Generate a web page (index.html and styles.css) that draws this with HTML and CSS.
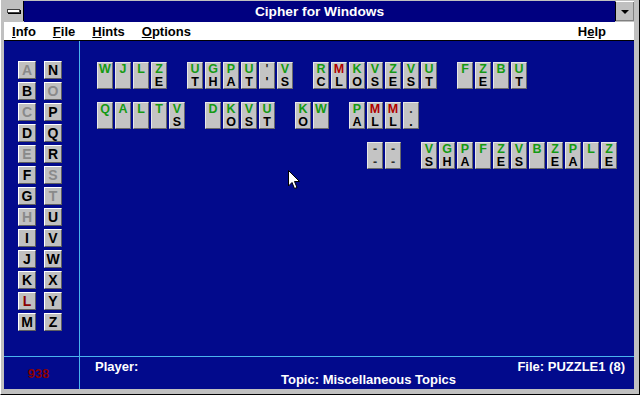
FILE: index.html
```html
<!DOCTYPE html>
<html>
<head>
<meta charset="utf-8">
<link rel="stylesheet" href="styles.css">
</head>
<body>
<div class="window">
  <div class="titlebar">
    <div class="sysbox"><span class="sysbar"></span></div>
    <div class="title">Cipher for Windows</div>
    <div class="minbox"><span class="tri"></span></div>
  </div>
  <div class="menubar">
    <span class="mi"><u>I</u>nfo</span>
    <span class="mi"><u>F</u>ile</span>
    <span class="mi"><u>H</u>ints</span>
    <span class="mi"><u>O</u>ptions</span>
    <span class="mi help">H<u>e</u>lp</span>
  </div>
  <div class="client">
    <div class="letters">
      <span class="lt dim">A</span><span class="lt">N</span>
      <span class="lt">B</span><span class="lt dim">O</span>
      <span class="lt dim">C</span><span class="lt">P</span>
      <span class="lt">D</span><span class="lt">Q</span>
      <span class="lt dim">E</span><span class="lt">R</span>
      <span class="lt">F</span><span class="lt dim">S</span>
      <span class="lt">G</span><span class="lt dim">T</span>
      <span class="lt dim">H</span><span class="lt">U</span>
      <span class="lt">I</span><span class="lt">V</span>
      <span class="lt">J</span><span class="lt">W</span>
      <span class="lt">K</span><span class="lt">X</span>
      <span class="lt red">L</span><span class="lt">Y</span>
      <span class="lt">M</span><span class="lt">Z</span>
    </div>
    <div class="puzzle">
      <div class="prow">
        <div class="word"><span class="t"><b>W</b><i></i></span><span class="t"><b>J</b><i></i></span><span class="t"><b>L</b><i></i></span><span class="t"><b>Z</b><i>E</i></span></div>
        <div class="word"><span class="t"><b>U</b><i>T</i></span><span class="t"><b>G</b><i>H</i></span><span class="t"><b>P</b><i>A</i></span><span class="t"><b>U</b><i>T</i></span><span class="t"><b class="p">'</b><i>'</i></span><span class="t"><b>V</b><i>S</i></span></div>
        <div class="word"><span class="t"><b>R</b><i>C</i></span><span class="t"><b class="r">M</b><i>L</i></span><span class="t"><b>K</b><i>O</i></span><span class="t"><b>V</b><i>S</i></span><span class="t"><b>Z</b><i>E</i></span><span class="t"><b>V</b><i>S</i></span><span class="t"><b>U</b><i>T</i></span></div>
        <div class="word"><span class="t"><b>F</b><i></i></span><span class="t"><b>Z</b><i>E</i></span><span class="t"><b>B</b><i></i></span><span class="t"><b>U</b><i>T</i></span></div>
      </div>
      <div class="prow">
        <div class="word"><span class="t"><b>Q</b><i></i></span><span class="t"><b>A</b><i></i></span><span class="t"><b>L</b><i></i></span><span class="t"><b>T</b><i></i></span><span class="t"><b>V</b><i>S</i></span></div>
        <div class="word"><span class="t"><b>D</b><i></i></span><span class="t"><b>K</b><i>O</i></span><span class="t"><b>V</b><i>S</i></span><span class="t"><b>U</b><i>T</i></span></div>
        <div class="word"><span class="t"><b>K</b><i>O</i></span><span class="t"><b>W</b><i></i></span></div>
        <div class="word"><span class="t"><b>P</b><i>A</i></span><span class="t"><b class="r">M</b><i>L</i></span><span class="t"><b class="r">M</b><i>L</i></span><span class="t"><b class="p">.</b><i>.</i></span></div>
      </div>
      <div class="prow shifted">
        <div class="word"><span class="t"><b class="p">-</b><i class="p">-</i></span><span class="t"><b class="p">-</b><i class="p">-</i></span></div>
        <div class="word"><span class="t"><b>V</b><i>S</i></span><span class="t"><b>G</b><i>H</i></span><span class="t"><b>P</b><i>A</i></span><span class="t"><b>F</b><i></i></span><span class="t"><b>Z</b><i>E</i></span><span class="t"><b>V</b><i>S</i></span><span class="t"><b>B</b><i></i></span><span class="t"><b>Z</b><i>E</i></span><span class="t"><b>P</b><i>A</i></span><span class="t"><b>L</b><i></i></span><span class="t"><b>Z</b><i>E</i></span></div>
      </div>
      <svg class="cursor" width="13" height="20" viewBox="0 0 13 20"><path d="M0.5 0.5 L0.5 16 L4 12.5 L6.5 18.5 L9 17.5 L6.5 11.5 L11.5 11.5 Z" fill="#fff" stroke="#000" stroke-width="1"/></svg>
    </div>
    <div class="score">938</div>
    <div class="status">
      <span class="player">Player:</span>
      <span class="file">File: PUZZLE1 (8)</span>
      <span class="topic">Topic: Miscellaneous Topics</span>
    </div>
  </div>
</div>
</body>
</html>
```

FILE: styles.css
```css
html, body {
  margin: 0;
  padding: 0;
}
body {
  width: 640px;
  height: 395px;
  overflow: hidden;
  background: #c0c0c0;
  font-family: "Liberation Sans", Arial, sans-serif;
}
.window {
  width: 640px;
  height: 395px;
  box-sizing: border-box;
  padding: 1px 5px 5px 3px;
  display: flex;
  flex-direction: column;
  background: #c0c0c0;
  border-left: 1px solid #fff;
  border-bottom: 1px solid #000;
  border-right: 1px solid #000;
}
.titlebar {
  height: 21px;
  display: flex;
  flex: none;
}
.sysbox {
  width: 19px;
  height: 20px;
  background: #c0c0c0;
  border-right: 1px solid #000;
  display: flex;
  align-items: center;
  justify-content: center;
}
.sysbar {
  width: 11px;
  height: 2px;
  background: #fff;
  border: 1px solid #404040;
  box-shadow: 1px 1px 0 #000;
}
.title {
  flex: 1;
  background: #000080;
  color: #fff;
  font-weight: bold;
  font-size: 13.7px;
  line-height: 21px;
  text-align: center;
}
.minbox {
  width: 18px;
  height: 19px;
  background: #c0c0c0;
  border-left: 1px solid #000;
  border-top: 1px solid #fff;
  box-shadow: inset -1px -1px 0 #808080;
  display: flex;
  align-items: center;
  justify-content: center;
}
.tri {
  width: 0;
  height: 0;
  border-left: 4px solid transparent;
  border-right: 4px solid transparent;
  border-top: 4px solid #000;
}
.menubar {
  height: 18px;
  flex: none;
  background: #fff;
  border-bottom: 1px solid #000;
  display: flex;
  align-items: center;
  padding-left: 8px;
  padding-right: 28px;
  gap: 17px;
  font-size: 13px;
  font-weight: bold;
  color: #000;
}
.mi u {
  text-decoration: underline;
  text-underline-offset: 1px;
}
.help {
  margin-left: auto;
}
.client {
  flex: 1;
  background: #020a8c;
  display: grid;
  grid-template-columns: 76px 1fr;
  grid-template-rows: 1fr 33px;
  min-height: 0;
}
.letters {
  border-right: 1px solid #4ab4ee;
  display: grid;
  grid-template-columns: 18px 18px;
  grid-auto-rows: 18px;
  column-gap: 8px;
  row-gap: 3px;
  padding: 20px 0 0 14px;
  align-content: start;
}
.lt {
  box-sizing: border-box;
  width: 18px;
  height: 18px;
  background: #c0c0c0;
  border: 1px solid;
  border-color: #fff #606060 #606060 #fff;
  font-size: 14px;
  font-weight: bold;
  line-height: 16px;
  text-align: center;
  color: #000;
}
.lt.dim {
  color: #8a8a8a;
}
.lt.red {
  color: #8a0000;
}
.puzzle {
  position: relative;
  padding: 21px 0 0 17px;
  display: flex;
  flex-direction: column;
  gap: 13px;
}
.prow {
  display: flex;
  gap: 20px;
}
.prow.shifted {
  margin-left: 270px;
}
.word {
  display: flex;
  gap: 2px;
}
.t {
  box-sizing: border-box;
  width: 16px;
  height: 27px;
  background: #c4c4c4;
  border: 1px solid;
  border-color: #e8e8e8 #6a6a6a #6a6a6a #e8e8e8;
  display: flex;
  flex-direction: column;
  align-items: center;
  font-size: 12.5px;
  line-height: 12.5px;
  font-weight: bold;
  padding-top: 0;
}
.t b {
  color: #149a14;
  height: 12.5px;
  font-weight: bold;
}
.t i {
  font-style: normal;
  color: #000;
  height: 12.5px;
  font-weight: bold;
}
.t b.r {
  color: #b00000;
}
.t .p {
  color: #303030;
}
.cursor {
  position: absolute;
  left: 208px;
  top: 129px;
}
.score {
  border-right: 1px solid #4ab4ee;
  border-top: 1px solid #4ab4ee;
  color: #8a0000;
  font-size: 13px;
  font-weight: bold;
  display: flex;
  align-items: center;
  justify-content: center;
  padding-right: 6px;
}
.status {
  border-top: 1px solid #4ab4ee;
  color: #fff;
  font-size: 13px;
  font-weight: bold;
  display: grid;
  grid-template-columns: 1fr auto;
  grid-template-rows: 13px 15px;
  padding: 3px 9px 0 15px;
  line-height: 13px;
}
.player {
  grid-column: 1;
  grid-row: 1;
}
.file {
  grid-column: 2;
  grid-row: 1;
}
.topic {
  grid-column: 1 / 3;
  grid-row: 2;
  padding-left: 186px;
}
```
